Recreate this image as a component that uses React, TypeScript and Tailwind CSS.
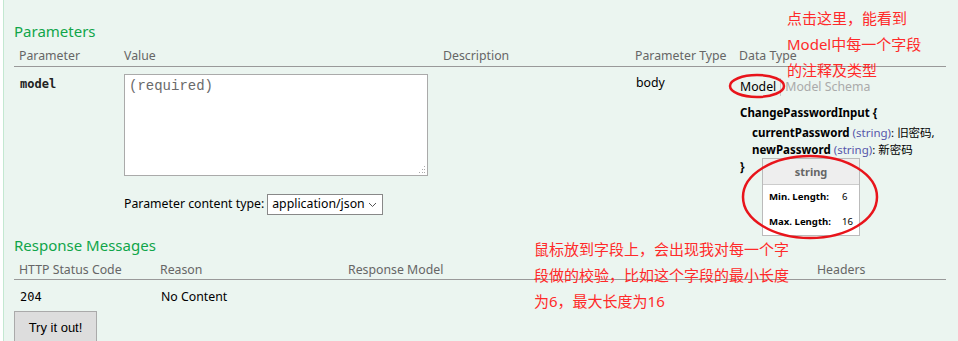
import React from "react";

const ui = { fontFamily: '"Noto Sans", "Open Sans", sans-serif' };
const cjk = { fontFamily: '"Noto Sans", "Noto Sans CJK SC", sans-serif' };
const mono = { fontFamily: '"DejaVu Sans Mono", monospace' };

function Annotation({ lines, className }: { lines: string[]; className: string }) {
    return (
        <div className={"absolute text-[15px] leading-[26px] text-[#ff2a2a] " + className} style={cjk}>
            {lines.map((l) => (
                <div key={l}>{l}</div>
            ))}
        </div>
    );
}

export default function App() {
    return (
        <div className="relative w-[958px] h-[341px] overflow-hidden bg-white" style={ui}>
            <div className="ml-[3px] h-full border-l border-[#c3e8d1] bg-[#ebf5f0] pl-[10px] pr-[12px] pt-[21px] text-[12.3px] text-[#333]">
                <h4 className="text-[15px] leading-[20px] text-[#10a54a]">Parameters</h4>

                {/* parameters table */}
                <div className="flex h-[26px] items-center border-b border-[#999] pt-[6px] text-[#666]">
                    <div className="w-[105px] pl-[5px]">Parameter</div>
                    <div className="w-[319px] pl-[5px]">Value</div>
                    <div className="w-[192px] pl-[5px]">Description</div>
                    <div className="w-[104px] pl-[5px]">Parameter Type</div>
                    <div className="pl-[5px]">Data Type</div>
                </div>
                <div className="flex h-[168px] text-[#222]">
                    <div className="w-[105px] pl-[6px] pt-[8px] text-[12px] font-bold" style={mono}>model</div>
                    <div className="w-[319px] pl-[5px] pt-[7px]">
                        <div className="relative h-[102px] w-[304px] border border-[#aaa] bg-white">
                            <span className="absolute left-[4px] top-[1px] text-[14px] text-[#6a6a6a]" style={{ fontFamily: '"Liberation Mono", monospace' }}>(required)</span>
                            <svg className="absolute bottom-[1px] right-[1px]" width="8" height="8" viewBox="0 0 8 8">
                                <g fill="#aaa">
                                    <rect x="6" y="0" width="1" height="1" />
                                    <rect x="4" y="3" width="1" height="1" />
                                    <rect x="6" y="3" width="1" height="1" />
                                    <rect x="1" y="6" width="1" height="1" />
                                    <rect x="4" y="6" width="1" height="1" />
                                    <rect x="6" y="6" width="1" height="1" />
                                </g>
                            </svg>
                        </div>
                        <div className="mt-[18px] flex items-center">
                            <span className="text-black">Parameter content type:</span>
                            <div className="ml-[3px] flex h-[21px] w-[116px] items-center justify-between border border-[#888] bg-white pl-[4px] pr-[5px] text-black">
                                <span>application/json</span>
                                <svg width="9" height="6" viewBox="0 0 9 6"><path d="M1 1l3.5 3.5L8 1" stroke="#555" fill="none" /></svg>
                            </div>
                        </div>
                    </div>
                    <div className="w-[192px]" />
                    <div className="w-[104px] pl-[6px] pt-[7px] text-black">body</div>
                    <div className="pl-[6px] pt-[11px]">
                        <div className="flex items-center">
                            <span className="text-black">Model</span>
                            <span className="mx-[4px] h-[18px] w-px bg-[#ccc]" />
                            <span className="text-[#aaa]">Model Schema</span>
                        </div>
                        <div className="mt-[8px] text-[11.5px] leading-[17px] text-black">
                            <div className="mb-[3px] font-bold">ChangePasswordInput {"{"}</div>
                            <div className="pl-[12px]"><b>currentPassword</b> <span className="text-[#55a]">(string)</span>: <span style={cjk}>旧密码,</span></div>
                            <div className="pl-[12px]"><b>newPassword</b> <span className="text-[#55a]">(string)</span>: <span style={cjk}>新密码</span></div>
                            <div className="font-bold">{"}"}</div>
                        </div>
                    </div>
                </div>

                <h4 className="text-[15px] leading-[20px] text-[#10a54a]">Response Messages</h4>
                <div className="flex h-[25px] items-center border-b border-[#999] pt-[6px] text-[#666]">
                    <div className="w-[141px] pl-[5px]">HTTP Status Code</div>
                    <div className="w-[188px] pl-[5px]">Reason</div>
                    <div className="w-[469px] pl-[5px]">Response Model</div>
                    <div className="pl-[5px]">Headers</div>
                </div>
                <div className="flex h-[31px] items-center pt-[3px] text-black">
                    <div className="w-[141px] pl-[6px] text-[12px]" style={mono}>204</div>
                    <div className="pl-[6px]">No Content</div>
                </div>
                <button className="h-[34px] w-[83px] border border-[#aaa] bg-[#ddd] text-[13px] text-black" style={{ fontFamily: '"Liberation Sans", sans-serif' }}>Try it out!</button>
            </div>

            {/* validation tooltip */}
            <div className="absolute left-[762px] top-[158px] w-[98px] border border-[#bbb] bg-white text-[9.6px] font-bold text-black">
                <div className="h-[26px] border-b border-[#ccc] bg-[#eee] text-center text-[11px] leading-[26px] text-[#666]">string</div>
                <div className="flex h-[25px] items-center pl-[6px]"><span className="w-[73px]">Min. Length:</span><span className="font-normal">6</span></div>
                <div className="flex h-[25px] items-center pl-[6px]"><span className="w-[73px]">Max. Length:</span><span className="font-normal">16</span></div>
            </div>

            {/* red annotation marks */}
            <svg className="pointer-events-none absolute left-0 top-0" width="958" height="341">
                <ellipse cx="757" cy="86" rx="27" ry="11" fill="none" stroke="#e8141b" strokeWidth="2.5" />
                <ellipse cx="810" cy="197" rx="67" ry="41" fill="none" stroke="#e8141b" strokeWidth="2.5" />
            </svg>
            <Annotation className="left-[787px] top-[5px]" lines={["点击这里，能看到", "Model中每一个字段", "的注释及类型"]} />
            <Annotation className="left-[534px] top-[236px]" lines={["鼠标放到字段上，会出现我对每一个字", "段做的校验，比如这个字段的最小长度", "为6，最大长度为16"]} />
        </div>
    );
}
